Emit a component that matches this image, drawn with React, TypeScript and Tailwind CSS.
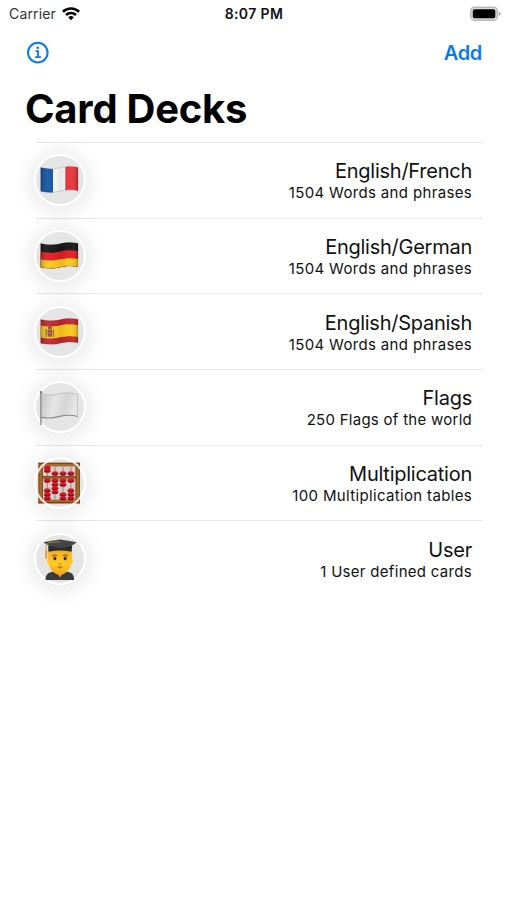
import React from 'react';

type Deck = {
  title: string;
  detail: string;
  icon: React.ReactNode;
  detailSpacing: string;
};

const flagShape = 'M6.7 13.6 C13 15 19 15.2 25 14 C32 12.3 38 12.1 44 13.5 V36.8 C38 35.3 32 35.8 25 37.4 C19 38.6 13 38.6 6.7 37.2 Z';

function FlagShade() {
  return (
    <>
      <defs>
        <linearGradient id="shade" x1="0" x2="1" y1="0" y2="0">
          <stop offset="0" stopColor="#000" stopOpacity="0.24" />
          <stop offset="0.25" stopColor="#fff" stopOpacity="0.04" />
          <stop offset="0.55" stopColor="#000" stopOpacity="0.08" />
          <stop offset="0.8" stopColor="#fff" stopOpacity="0.03" />
          <stop offset="1" stopColor="#000" stopOpacity="0.22" />
        </linearGradient>
      </defs>
      <path d={flagShape} fill="url(#shade)" stroke="#000" strokeOpacity="0.2" strokeWidth="0.7" />
    </>
  );
}

function FrenchFlag() {
  return (
    <svg viewBox="0 0 52 52" className="size-[52px]">
      <path d={flagShape} fill="#fafafa" />
      <path d="M6.7 13.6 C11 14.6 15 15 19 14.9 V38.4 C15 38.5 11 38.1 6.7 37.2 Z" fill="#1554a8" />
      <path d="M31.3 12.9 C36 12.3 40 12.6 44 13.5 V36.8 C40 35.8 36 35.6 31.3 36.2 Z" fill="#e8333a" />
      <FlagShade />
    </svg>
  );
}

function GermanFlag() {
  return (
    <svg viewBox="0 0 52 52" className="size-[52px]">
      <path d={flagShape} fill="#151515" />
      <path d="M6.7 21.5 C13 23 19 23 25 21.8 C32 20 38 19.9 44 21.3 V36.8 C38 35.3 32 35.8 25 37.4 C19 38.6 13 38.6 6.7 37.2 Z" fill="#e51c22" />
      <path d="M6.7 29.4 C13 30.8 19 30.8 25 29.6 C32 28 38 27.6 44 29 V36.8 C38 35.3 32 35.8 25 37.4 C19 38.6 13 38.6 6.7 37.2 Z" fill="#fbc91b" />
      <FlagShade />
    </svg>
  );
}

function SpanishFlag() {
  return (
    <svg viewBox="0 0 52 52" className="size-[52px]">
      <path d={flagShape} fill="#c0262f" />
      <path d="M6.7 19.5 C13 20.9 19 21 25 19.8 C32 18.1 38 17.9 44 19.3 V31 C38 29.6 32 30 25 31.6 C19 32.8 13 32.8 6.7 31.4 Z" fill="#fbc91b" />
      <path d="M12.2 23 V30 M19.5 23 V30" stroke="#8c7254" strokeWidth="1.3" />
      <path d="M13.6 23.8 H18.2 V28.5 Q18 31 15.9 31 Q13.8 31 13.6 28.5 Z" fill="#943f2c" />
      <path d="M14 23.3 Q13.3 20.8 15.9 20.6 Q18.5 20.8 17.8 23.3 Z" fill="#855027" />
      <path d="M13.8 27 H18 M15.9 24.2 V30.2" stroke="#bf8c5a" strokeWidth="0.6" />
      <path d="M11.3 30.3 H13.2 M18.5 30.3 H20.4" stroke="#557" strokeWidth="0.8" />
      <FlagShade />
    </svg>
  );
}

function WhiteFlag() {
  return (
    <svg viewBox="0 0 52 52" className="size-[52px]">
      <defs>
        <linearGradient id="cloth" x1="0" x2="1" y1="0" y2="0.15">
          <stop offset="0" stopColor="#c4c4c4" />
          <stop offset="0.4" stopColor="#e5e5e5" />
          <stop offset="0.72" stopColor="#d5d5d5" />
          <stop offset="1" stopColor="#e6e6e6" />
        </linearGradient>
      </defs>
      <path d="M7.2 12.2 C13 14.5 18 14.6 24 13 C31 11.5 37 11.5 43.6 13.4 V35.5 C37 33.5 31 34.1 25 35.6 C18 37.4 12 37.3 7.2 36.1 Z" fill="url(#cloth)" />
      <path d="M7.2 12.2 C13 14.5 18 14.6 24 13 C31 11.5 37 11.5 43.6 13.4 V35.5" fill="none" stroke="#b9b9b9" strokeWidth="0.8" />
      <path d="M7.2 36.1 C12 37.3 18 37.4 25 35.6 C31 34.1 37 33.5 43.6 35.5" fill="none" stroke="#888" strokeWidth="1.1" />
      <path d="M6.9 11 V44" stroke="#858585" strokeWidth="1.3" />
      <circle cx="6.9" cy="11" r="1" fill="#666" />
    </svg>
  );
}

// Each entry is one rod: x position and the heights of its beads
const rods = [
  { x: 13.3, beads: [10.8, 13.6, 23.6, 33.6, 37.4, 41.2] },
  { x: 21, beads: [16.6, 23.6, 27.4, 31.2, 35] },
  { x: 29, beads: [16.6, 23.6, 27.4, 37.4, 41.2] },
  { x: 36.9, beads: [16.6, 23.6, 33.6, 37.4, 41.2] },
];

function Abacus() {
  return (
    <svg viewBox="0 0 52 52" className="size-[52px]">
      <rect x="4.4" y="5.8" width="41.5" height="40.7" rx="0.6" fill="#a76a2c" />
      <rect x="8.8" y="9.4" width="32.8" height="10" fill="#d8cecc" />
      <rect x="8.8" y="22.3" width="32.8" height="20.3" fill="#d8cecc" />
      <path d="M4.4 6.3 H46 M8.4 19.7 H42 M4.4 45.7 H46" stroke="#703c17" strokeWidth="1" />
      <path d="M5 5.8 V46.5 M45.4 5.8 V46.5 M8.4 9 V43 M42 9 V43" stroke="#7d481d" strokeWidth="0.9" />
      {rods.map((rod) => (
        <g key={rod.x}>
          <path d={`M${rod.x} 9.5 V19 M${rod.x} 22.3 V42.5`} stroke="#9c7773" strokeWidth="0.9" />
          {rod.beads.map((y) => (
            <g key={y}>
              <path d={`M${rod.x - 2} ${y - 2} H${rod.x + 2} L${rod.x + 3.7} ${y} L${rod.x + 2} ${y + 2} H${rod.x - 2} L${rod.x - 3.7} ${y} Z`} fill="#d01822" />
              <path d={`M${rod.x - 3.4} ${y + 0.5} L${rod.x - 1.8} ${y + 2} H${rod.x + 1.8} L${rod.x + 3.4} ${y + 0.5}`} fill="#8a0e18" />
            </g>
          ))}
        </g>
      ))}
      <circle cx="26" cy="26" r="24.8" fill="none" stroke="#fff" strokeOpacity="0.85" strokeWidth="2" />
    </svg>
  );
}

function Graduate() {
  return (
    <svg viewBox="0 0 52 52" className="size-[52px]">
      <defs>
        <linearGradient id="face" x1="0" x2="0" y1="0" y2="1">
          <stop offset="0" stopColor="#f6ac1c" />
          <stop offset="0.55" stopColor="#ffcc28" />
          <stop offset="1" stopColor="#f1a41c" />
        </linearGradient>
      </defs>
      <path d="M21.5 37 H30.5 V43 Q26 45 21.5 43 Z" fill="#d98b15" />
      <path d="M11.5 47 C11.7 41.5 14 38.9 21.5 38.6 L26 42 L30.5 38.6 C38 38.9 40 41.5 40.2 47 Z" fill="#383a3c" />
      <path d="M23 40 L26 44.5 L29.2 40 Z" fill="#e89b19" />
      <path d="M14.3 17 H37.7 L38 26 C39.6 26.1 39.3 30 37.5 30.2 C36.6 35.8 32 41.7 26 41.7 C20 41.7 15.3 35.8 14.4 30.2 C12.7 30 12.4 26.1 14 26 Z" fill="url(#face)" />
      <path d="M18 23 Q20.5 21.2 22.8 22.8 M29 22.8 Q31.5 21.2 34 23" fill="none" stroke="#7b4a13" strokeWidth="1.1" />
      <ellipse cx="20.9" cy="25.4" rx="1.5" ry="1.9" fill="#4a2a13" />
      <ellipse cx="31.1" cy="25.4" rx="1.5" ry="1.9" fill="#4a2a13" />
      <path d="M24.6 30.5 Q26 31.6 27.5 30.5 M23.8 34.2 Q26 32.8 28.3 34.2 Q26 36 23.8 34.2" fill="none" stroke="#b96c14" strokeWidth="0.9" />
      <path d="M14.1 12.5 L14.5 18.8 Q26 16.2 37.6 18.8 L38.2 12.5 Z" fill="#292c2f" />
      <path d="M9.3 9.3 Q18 7.6 26 6.6 Q34 7.6 42.7 9.3 L39.5 11.4 Q34 14.8 26 15 Q18 14.6 13 11.6 Z" fill="#414548" />
      <path d="M26 8.6 L14 9.6 L12.2 11.5 V20" fill="none" stroke="#c48a30" strokeWidth="0.8" />
      <path d="M12.2 17.5 V25.6" stroke="#e79b27" strokeWidth="2" />
    </svg>
  );
}

const decks: Deck[] = [
  { title: 'English/French', detail: '1504 Words and phrases', icon: <FrenchFlag />, detailSpacing: 'tracking-[0.34px]' },
  { title: 'English/German', detail: '1504 Words and phrases', icon: <GermanFlag />, detailSpacing: 'tracking-[0.34px]' },
  { title: 'English/Spanish', detail: '1504 Words and phrases', icon: <SpanishFlag />, detailSpacing: 'tracking-[0.34px]' },
  { title: 'Flags', detail: '250 Flags of the world', icon: <WhiteFlag />, detailSpacing: 'tracking-[0.27px]' },
  { title: 'Multiplication', detail: '100 Multiplication tables', icon: <Abacus />, detailSpacing: 'tracking-[0.34px]' },
  { title: 'User', detail: '1 User defined cards', icon: <Graduate />, detailSpacing: 'tracking-[0.3px]' },
];

function StatusBar() {
  return (
    <div className="grid h-[27px] grid-cols-3 items-center pl-[9px] pr-[6px] text-[14px]">
      <div className="flex items-center gap-[6px]">
        <span className="tracking-[0.15px] text-[#333]">Carrier</span>
        <svg viewBox="0 0 18 14" className="h-[14px] w-[18px]" fill="none" stroke="#000" strokeWidth="2.6">
          <path d="M0.9 4.8 C5.5 0.4 12.5 0.4 17.1 4.8" />
          <path d="M4 8 C6.8 5.3 11.2 5.3 14 8" />
          <path d="M6.2 10.2 Q9 7.9 11.8 10.2 L9 13.2 Z" fill="#000" stroke="none" />
        </svg>
      </div>
      <span className="-ml-[2px] text-center font-semibold tracking-[0.4px] text-[#111]">8:07 PM</span>
      <div className="flex justify-end">
        <svg viewBox="0 0 31 16" className="h-4 w-[31px]">
          <rect x="0.8" y="1.2" width="26.5" height="13" rx="3.8" fill="#ddd" stroke="#bbb" strokeWidth="1.5" />
          <rect x="2.8" y="3.2" width="22.5" height="9" rx="1.7" fill="#000" />
          <path d="M28.7 5.5 Q30.7 6 30.7 7.7 Q30.7 9.4 28.7 9.9 Z" fill="#aaa" />
        </svg>
      </div>
    </div>
  );
}

function DeckRow({ deck }: { deck: Deck }) {
  return (
    <li className="flex h-[75.7px] items-center justify-between border-t border-[#e6e6e6] pr-[10px]">
      <div className="-ml-[2px] size-[52px] rounded-full border-2 border-white bg-[#e5e5e5] shadow-[0_2px_18px_6px_rgba(0,0,0,0.08)]">
        <div className="-ml-[2px] -mt-[2px] size-[52px]">{deck.icon}</div>
      </div>
      <div className="pt-[2px] text-right text-[#111]">
        <h2 className="text-[20px] leading-6 tracking-[-0.25px]">{deck.title}</h2>
        <p className={`text-[15px] leading-5 ${deck.detailSpacing}`}>{deck.detail}</p>
      </div>
    </li>
  );
}

export default function App() {
  return (
    <main className="h-[900px] w-[507px] overflow-hidden bg-white font-['Inter',sans-serif] text-black">
      <StatusBar />
      <nav className="flex h-[50px] items-center justify-between pl-[26px] pr-[25px] pt-[2px] text-[#0879f5]">
        <button aria-label="Information">
          <svg viewBox="0 0 24 24" className="size-6" fill="none" stroke="currentColor" strokeWidth="2">
            <circle cx="11.8" cy="11.6" r="9.8" />
            <path d="M9.5 10.1 H12 V15.9 M9.1 16.1 H14.9" strokeWidth="1.8" />
            <circle cx="11.8" cy="6.8" r="1.4" fill="currentColor" stroke="none" />
          </svg>
        </button>
        <button className="text-[20px] font-semibold tracking-[-0.3px]">Add</button>
      </nav>
      <h1 className="h-[65px] pl-[25px] pt-[7px] text-[40px] font-bold leading-[50px] tracking-[-0.25px]">Card Decks</h1>
      <ul className="pl-[36px] pr-[25px]">
        {decks.map((deck) => (
          <DeckRow key={deck.title} deck={deck} />
        ))}
      </ul>
    </main>
  );
}
